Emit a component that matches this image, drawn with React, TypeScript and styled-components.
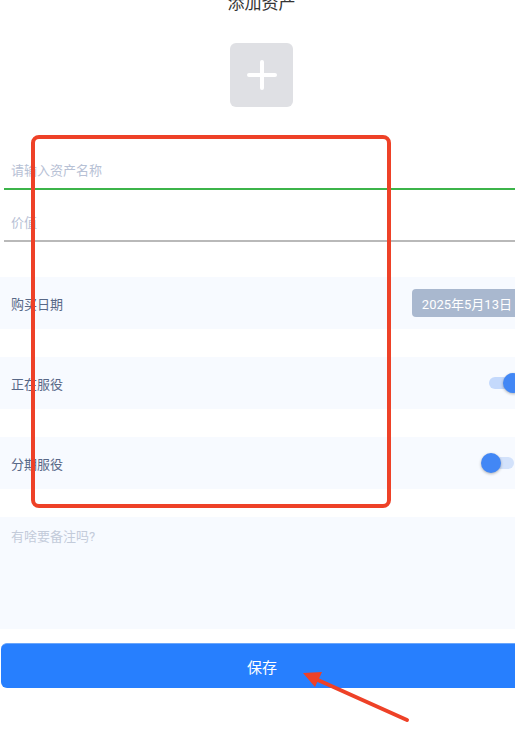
import React from "react";
import styled, { createGlobalStyle } from "styled-components";

const Global = createGlobalStyle`
  html, body { margin: 0; padding: 0; background: #ffffff; overflow: hidden; }
  body { font-family: Roboto, "Noto Sans CJK SC", sans-serif; }
  * { box-sizing: border-box; }
`;

const Page = styled.div`
  position: relative;
  width: 523px;
  height: 753px;
  display: flex;
  flex-direction: column;
  align-items: stretch;
`;

const Title = styled.h1`
  margin: -9px 0 0;
  font-size: 17px;
  line-height: 24px;
  font-weight: 400;
  color: #333333;
  text-align: center;
`;

const AddBox = styled.div`
  align-self: center;
  width: 63px;
  height: 64px;
  margin-top: 28px;
  border-radius: 6px;
  background: #dfe0e4;
  display: flex;
  align-items: center;
  justify-content: center;
`;

const Field = styled.div<{ $active?: boolean }>`
  margin-left: 4px;
  height: 52px;
  display: flex;
  align-items: center;
  padding: 13px 7px 0;
  border-bottom: ${(p) => (p.$active ? "2px solid #3cb44a" : "2px solid #b9b9b9")};
  font-size: 13px;
  color: #b7c1d5;
`;

const Fields = styled.div`
  margin-top: 31px;
  display: flex;
  flex-direction: column;
`;

const Rows = styled.div`
  margin-top: 35px;
  display: flex;
  flex-direction: column;
  gap: 28px;
`;

const Row = styled.div`
  height: 52px;
  background: #f7faff;
  display: flex;
  align-items: center;
  justify-content: space-between;
  padding: 0 6px 0 11px;
  font-size: 13px;
  color: #586887;
`;

const DateChip = styled.div`
  height: 28px;
  margin-right: -5px;
  padding: 0 10px;
  display: flex;
  align-items: center;
  border-radius: 4px;
  background: #a9b8cf;
  color: #ffffff;
  font-size: 13px;
`;

const SwitchWrap = styled.div<{ $on?: boolean }>`
  position: relative;
  width: 36px;
  height: 20px;
  margin-right: ${(p) => (p.$on ? -6 : 0)}px;
  display: flex;
  align-items: center;
`;

const Track = styled.div<{ $on?: boolean }>`
  position: absolute;
  left: 2px;
  right: 3px;
  top: 4px;
  height: 12px;
  border-radius: 6px;
  background: ${(p) => (p.$on ? "#c4d9fc" : "#d3e2fb")};
`;

const Knob = styled.div<{ $on?: boolean }>`
  position: absolute;
  top: 0;
  left: ${(p) => (p.$on ? 16 : 0)}px;
  width: 20px;
  height: 20px;
  border-radius: 50%;
  background: #4287f5;
  box-shadow: 0 1px 3px rgba(0, 0, 0, 0.3);
`;

const Note = styled.div`
  margin-top: 28px;
  height: 112px;
  background: #f7faff;
  padding: 10px 11px;
  font-size: 13px;
  line-height: 20px;
  color: #c3cbda;
`;

const SaveButton = styled.button`
  margin: 14px 0 0 1px;
  height: 45px;
  border: none;
  border-top: 1px solid #6aa6fb;
  border-radius: 6px;
  background: #277ffe;
  color: #ffffff;
  font-family: Roboto, "Noto Sans CJK SC", sans-serif;
  font-size: 15px;
  padding: 0;
`;

const Annotation = styled.div`
  position: absolute;
  left: 31px;
  top: 135px;
  width: 360px;
  height: 373px;
  border: 4px solid #ee4127;
  border-radius: 8px;
  pointer-events: none;
`;

const ArrowSvg = styled.svg`
  position: absolute;
  left: 295px;
  top: 665px;
  overflow: visible;
  pointer-events: none;
`;

function Switch({ on }: { on?: boolean }) {
  return (
    <SwitchWrap $on={on}>
      <Track $on={on} />
      <Knob $on={on} />
    </SwitchWrap>
  );
}

export default function App() {
  return (
    <>
      <Global />
      <Page>
        <Title>添加资产</Title>
        <AddBox>
          <svg width="30" height="30" viewBox="0 0 30 30">
            <path d="M15 2 V28 M2 15 H28" stroke="#ffffff" strokeWidth="4" strokeLinecap="round" />
          </svg>
        </AddBox>
        <Fields>
          <Field $active>请输入资产名称</Field>
          <Field>价值</Field>
        </Fields>
        <Rows>
          <Row>
            <span>购买日期</span>
            <DateChip>2025年5月13日</DateChip>
          </Row>
          <Row>
            <span>正在服役</span>
            <Switch on />
          </Row>
          <Row>
            <span>分期服役</span>
            <Switch />
          </Row>
        </Rows>
        <Note>有啥要备注吗?</Note>
        <SaveButton>保存</SaveButton>
        <Annotation />
        <ArrowSvg width="120" height="60">
          <line x1="112" y1="55" x2="14" y2="11" stroke="#ee4127" strokeWidth="4" strokeLinecap="round" />
          <polygon points="8,8 27,7 20,22" fill="#ee4127" />
        </ArrowSvg>
      </Page>
    </>
  );
}
